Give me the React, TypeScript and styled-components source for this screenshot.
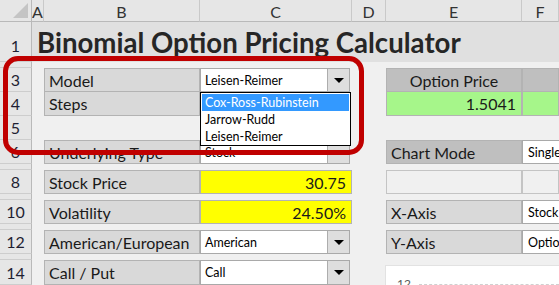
import React from "react";
import styled, { createGlobalStyle } from "styled-components";

const GlobalStyle = createGlobalStyle`
  html, body { margin: 0; padding: 0; background: #f0f0f0; overflow: hidden; }
  * { box-sizing: border-box; }
`;

const CELL_FONT = `"Lato", "Liberation Sans", sans-serif`;
const UI_FONT = `"Lato", "Open Sans", sans-serif`;

const Sheet = styled.div`
  position: relative;
  width: 559px;
  height: 285px;
  overflow: hidden;
  display: grid;
  grid-template-columns: 32px 12px 156px 152px 34px 136px 1fr;
  grid-template-rows: 22px 40px 6px 24px 24px 24px 24px 6px 24px 6px 24px 6px 24px 6px 1fr;
  background: #f0f0f0;
  font-family: ${CELL_FONT};
  color: #1a1a1a;
`;

type Pos = { $c: string | number; $r: string | number };

const Corner = styled.div`
  grid-column: 1;
  grid-row: 1;
  position: relative;
  background: #e6e6e6;
  border-right: 1px solid #b9b9b9;
  border-bottom: 1px solid #b9b9b9;
  &::after {
    content: "";
    position: absolute;
    right: 3px;
    bottom: 3px;
    width: 0;
    height: 0;
    border-left: 15px solid transparent;
    border-bottom: 15px solid #c4c4c4;
  }
`;

const ColHead = styled.div<{ $c: number }>`
  grid-column: ${(p) => p.$c};
  grid-row: 1;
  background: #e6e6e6;
  border-right: 1px solid #c9c9c9;
  border-bottom: 1px solid #b9b9b9;
  display: flex;
  align-items: center;
  justify-content: center;
  font-size: 16px;
  color: #333;
  padding-top: 1px;
`;

const RowHead = styled.div<{ $r: number; $bottom?: boolean }>`
  grid-column: 1;
  grid-row: ${(p) => p.$r};
  background: #e6e6e6;
  border-right: 1px solid #b9b9b9;
  border-bottom: 1px solid #cdcdcd;
  display: flex;
  align-items: ${(p) => (p.$bottom ? "flex-end" : "center")};
  padding-bottom: ${(p) => (p.$bottom ? "6px" : "0")};
  justify-content: center;
  font-size: 16px;
  color: #1f1f33;
`;

const TitleRow = styled.div`
  grid-column: 2 / 8;
  grid-row: 2;
  background: #e0e0e0;
  display: flex;
  align-items: flex-end;
  padding: 0 0 3px 5px;
  font-family: ${CELL_FONT};
  font-weight: 700;
  font-size: 27.6px;
  color: #262626;
  white-space: nowrap;
`;

const Cell = styled.div<Pos>`
  grid-column: ${(p) => p.$c};
  grid-row: ${(p) => p.$r};
  display: flex;
  align-items: center;
  white-space: nowrap;
  overflow: hidden;
  font-size: 16px;
`;

const LabelCell = styled(Cell)<{ $dark?: boolean; $center?: boolean; $noTop?: boolean }>`
  background: ${(p) => (p.$dark ? "#bfbfbf" : "#d9d9d9")};
  border: 1px solid #b3b3b3;
  border-top-width: ${(p) => (p.$noTop ? "0" : "1px")};
  padding: 0 4px;
  justify-content: ${(p) => (p.$center ? "center" : "flex-start")};
`;

const NumberCell = styled(Cell)<{ $bg: string; $noTop?: boolean }>`
  background: ${(p) => p.$bg};
  border: 1px solid #b3b3b3;
  border-top-width: ${(p) => (p.$noTop ? "0" : "1px")};
  justify-content: flex-end;
  padding: 0 5px;
`;

const EmptyCell = styled(Cell)`
  border: 1px solid #c4c4c4;
`;

const ComboSlot = styled(Cell)`
  position: relative;
  overflow: visible;
  padding-right: 2px;
  align-items: stretch;
`;

const Combo = styled.div`
  position: relative;
  flex: 1;
  display: flex;
  background: #fff;
  border: 1px solid #a9a9a9;
  font-family: ${UI_FONT};
  font-size: 12.5px;
  color: #000;
`;

const ComboText = styled.div`
  flex: 1;
  display: flex;
  align-items: center;
  padding-left: 4px;
  overflow: hidden;
  white-space: nowrap;
`;

const ComboButton = styled.div`
  width: 22px;
  background: #dedede;
  border-left: 1px solid #adadad;
  display: flex;
  align-items: center;
  justify-content: center;
  &::after {
    content: "";
    width: 0;
    height: 0;
    border-left: 5px solid transparent;
    border-right: 5px solid transparent;
    border-top: 5px solid #000;
  }
`;

const DropList = styled.div`
  position: absolute;
  top: 23px;
  left: -1px;
  width: 151px;
  background: #fff;
  border: 1px solid #000;
  padding: 1px 1px 0 1px;
  z-index: 5;
  font-family: ${UI_FONT};
  font-size: 12.5px;
`;

const DropItem = styled.div<{ $active?: boolean }>`
  height: 17px;
  line-height: 17px;
  padding-left: 3px;
  background: ${(p) => (p.$active ? "#3399ff" : "transparent")};
  color: ${(p) => (p.$active ? "#fff" : "#000")};
  white-space: nowrap;
`;

const EdgeCombo = styled(Cell)`
  background: #fff;
  border: 1px solid #a9a9a9;
  border-right: none;
  font-family: ${UI_FONT};
  font-size: 12.5px;
  color: #000;
  padding-left: 5px;
`;

const Chart = styled(Cell)`
  margin-top: 5px;
  margin-left: -1px;
  background: #fff;
  border-top: 1px solid #e2e2e2;
  border-left: 1px solid #e2e2e2;
  align-items: flex-start;
  gap: 8px;
  padding: 11px 0 0 11px;
  overflow: hidden;
`;

const AxisLabel = styled.span`
  font-family: ${UI_FONT};
  font-size: 12px;
  color: #595959;
  line-height: 14px;
`;

const GridLine = styled.div`
  flex: 1;
  margin-top: 7px;
  border-top: 1px dashed #d0d0d0;
`;

const Highlight = styled.div`
  position: absolute;
  left: 3px;
  top: 56px;
  width: 361px;
  height: 99px;
  border: 5px solid #c00000;
  border-radius: 15px;
  z-index: 10;
  pointer-events: none;
`;

const columns = ["A", "B", "C", "D", "E", "F"];
const rowNums: { r: number; label?: string; bottom?: boolean }[] = [
  { r: 2, label: "1", bottom: true },
  { r: 3 },
  { r: 4, label: "3" },
  { r: 5, label: "4" },
  { r: 6, label: "5" },
  { r: 7, label: "6" },
  { r: 8 },
  { r: 9, label: "8" },
  { r: 10 },
  { r: 11, label: "10" },
  { r: 12 },
  { r: 13, label: "12" },
  { r: 14 },
  { r: 15, label: "14" },
];

const ComboBox: React.FC<{ value: string; children?: React.ReactNode }> = ({ value, children }) => (
  <Combo>
    <ComboText>{value}</ComboText>
    <ComboButton />
    {children}
  </Combo>
);

export default function App() {
  return (
    <>
      <GlobalStyle />
      <Sheet>
        <Corner />
        {columns.map((c, i) => (
          <ColHead key={c} $c={i + 2}>
            {c}
          </ColHead>
        ))}
        {rowNums.map((row) => (
          <RowHead key={row.r} $r={row.r} $bottom={row.bottom}>
            {row.label}
          </RowHead>
        ))}

        <TitleRow>Binomial Option Pricing Calculator</TitleRow>

        {/* Inputs */}
        <LabelCell $c={3} $r={4}>Model</LabelCell>
        <ComboSlot $c={4} $r={4}>
          <ComboBox value="Leisen-Reimer">
            <DropList>
              <DropItem $active>Cox-Ross-Rubinstein</DropItem>
              <DropItem>Jarrow-Rudd</DropItem>
              <DropItem>Leisen-Reimer</DropItem>
            </DropList>
          </ComboBox>
        </ComboSlot>
        <LabelCell $c={3} $r={5} $noTop>Steps</LabelCell>

        <LabelCell $c={3} $r={7}>Underlying Type</LabelCell>
        <ComboSlot $c={4} $r={7}>
          <ComboBox value="Stock" />
        </ComboSlot>

        <LabelCell $c={3} $r={9}>Stock Price</LabelCell>
        <NumberCell $c={4} $r={9} $bg="#ffff00">30.75</NumberCell>

        <LabelCell $c={3} $r={11}>Volatility</LabelCell>
        <NumberCell $c={4} $r={11} $bg="#ffff00">24.50%</NumberCell>

        <LabelCell $c={3} $r={13}>American/European</LabelCell>
        <ComboSlot $c={4} $r={13}>
          <ComboBox value="American" />
        </ComboSlot>

        <LabelCell $c={3} $r={15}>Call / Put</LabelCell>
        <ComboSlot $c={4} $r={15}>
          <ComboBox value="Call" />
        </ComboSlot>

        {/* Outputs */}
        <LabelCell $c={6} $r={4} $dark $center>Option Price</LabelCell>
        <LabelCell $c={7} $r={4} $dark />
        <NumberCell $c={6} $r={5} $bg="#a6f68a" $noTop>1.5041</NumberCell>
        <NumberCell $c={7} $r={5} $bg="#a6f68a" $noTop />

        <LabelCell $c={6} $r={7} $dark>Chart Mode</LabelCell>
        <EdgeCombo $c={7} $r={7}>Single</EdgeCombo>

        <EmptyCell $c={6} $r={9} />
        <EmptyCell $c={7} $r={9} />

        <LabelCell $c={6} $r={11}>X-Axis</LabelCell>
        <EdgeCombo $c={7} $r={11}>Stock</EdgeCombo>

        <LabelCell $c={6} $r={13}>Y-Axis</LabelCell>
        <EdgeCombo $c={7} $r={13}>Option</EdgeCombo>

        <Chart $c="6 / 8" $r={15}>
          <AxisLabel>12</AxisLabel>
          <GridLine />
        </Chart>

        <Highlight />
      </Sheet>
    </>
  );
}
